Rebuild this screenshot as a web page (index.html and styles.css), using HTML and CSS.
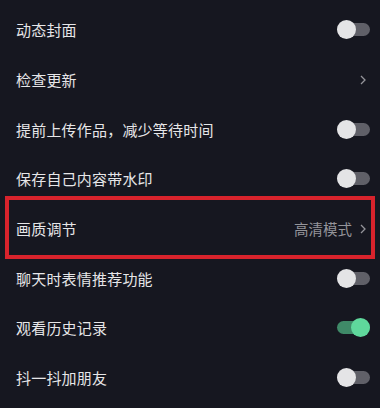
FILE: index.html
```html
<!DOCTYPE html>
<html lang="zh-CN">
<head>
  <meta charset="UTF-8"/>
  <meta name="viewport" content="width=device-width, initial-scale=1"/>
  <title>设置</title>
  <link rel="stylesheet" href="styles.css">
</head>
<body>
  <ul class="settings">
    <li class="row">
      <span class="label">动态封面</span>
      <span class="switch"></span>
    </li>
    <li class="row">
      <span class="label">检查更新</span>
      <svg class="chevron" viewBox="0 0 6 10"><path d="M1 1l4 4-4 4"/></svg>
    </li>
    <li class="row">
      <span class="label">提前上传作品，减少等待时间</span>
      <span class="switch"></span>
    </li>
    <li class="row">
      <span class="label">保存自己内容带水印</span>
      <span class="switch"></span>
    </li>
    <li class="row highlighted">
      <span class="label">画质调节</span>
      <span class="value">高清模式</span>
      <svg class="chevron" viewBox="0 0 6 10"><path d="M1 1l4 4-4 4"/></svg>
    </li>
    <li class="row">
      <span class="label">聊天时表情推荐功能</span>
      <span class="switch"></span>
    </li>
    <li class="row">
      <span class="label">观看历史记录</span>
      <span class="switch on"></span>
    </li>
    <li class="row">
      <span class="label">抖一抖加朋友</span>
      <span class="switch"></span>
    </li>
  </ul>
</body>
</html>
```

FILE: styles.css
```css
/* COLORS */
:root {
  --bg: #161720;
  --text: #e6e6e8;
  --muted: #94949a;
  --track: #606068;
  --knob: #e4e4e6;
  --green-track: #3f8a68;
  --green-knob: #5fd89c;
  --mark: #d8232c;
}

* { box-sizing:border-box; margin:0; padding:0 }
html, body {
  width:380px;
  height:408px;
  overflow:hidden;
  background: var(--bg);
  color: var(--text);
  font-family:"Noto Sans CJK SC","Noto Sans",sans-serif;
}

.settings {
  list-style:none;
  padding-top:5px;
}

.row {
  display:flex;
  align-items:center;
  height:49.7px;
  padding:0 10px 0 16px;
  position:relative;
}
.label {
  flex:1;
  font-size:15px;
  letter-spacing:0.2px;
}
.value {
  font-size:14.5px;
  color: var(--muted);
  margin-right:8px;
}

.chevron {
  width:6px;
  height:10px;
  margin-right:4px;
  fill:none;
  stroke: var(--muted);
  stroke-width:1.3;
}

/* SWITCH */
.switch {
  width:33px;
  height:13px;
  border-radius:7px;
  background: var(--track);
  position:relative;
}
.switch::after {
  content:"";
  position:absolute;
  left:0;
  top:-3px;
  width:19px;
  height:19px;
  border-radius:50%;
  background: var(--knob);
}
.switch.on { background: var(--green-track); }
.switch.on::after {
  left:auto;
  right:0;
  background: var(--green-knob);
}

/* RED ANNOTATION BOX */
.highlighted::after {
  content:"";
  position:absolute;
  left:5px;
  right:5px;
  top:-8px;
  bottom:-6px;
  border:4px solid var(--mark);
}
```
